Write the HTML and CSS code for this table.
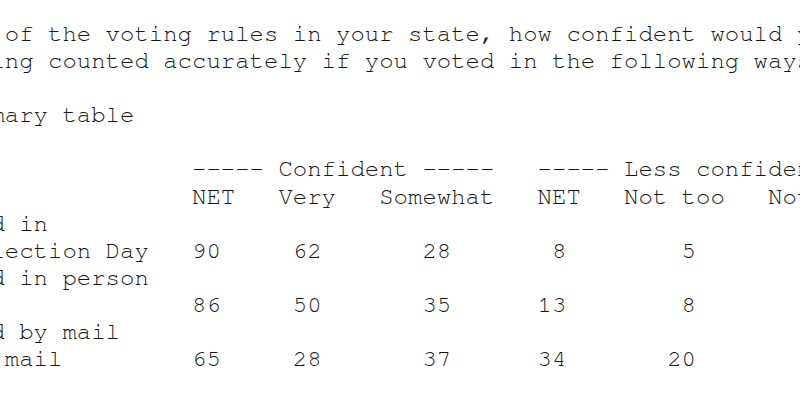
FILE: index.html
```html
<!DOCTYPE html>
<html lang="en">
<head>
<meta charset="utf-8">
<title>Voting confidence summary table</title>
<link rel="stylesheet" href="styles.css">
</head>
<body>
<main class="page">
<pre class="listing">Thinking of the voting rules in your state, how confident would you be that
votes being counted accurately if you voted in the following ways?

     Summary table

                      ----- Confident -----   ----- Less confident -----
                      NET   Very   Somewhat   NET   Not too   Not at all
    Voted in
    on Election Day   90     62       28       8        5
    Voted in person
                      86     50       35      13        8
    Voted by mail
      by mail         65     28       37      34       20
</pre>
</main>
</body>
</html>
```

FILE: styles.css
```css
html, body {
  margin: 0;
  padding: 0;
  background: #ffffff;
}

.page {
  width: 800px;
  height: 416px;
  overflow: hidden;
  padding-top: 21px;
  box-sizing: border-box;
}

.listing {
  margin: 0 0 0 -124.8px;
  font-family: "Nimbus Mono PS", "Nimbus Mono L", "FreeMono", "Courier New", "Liberation Mono", monospace;
  font-size: 24px;
  line-height: 27.1px;
  color: #161616;
  white-space: pre;
}
```
